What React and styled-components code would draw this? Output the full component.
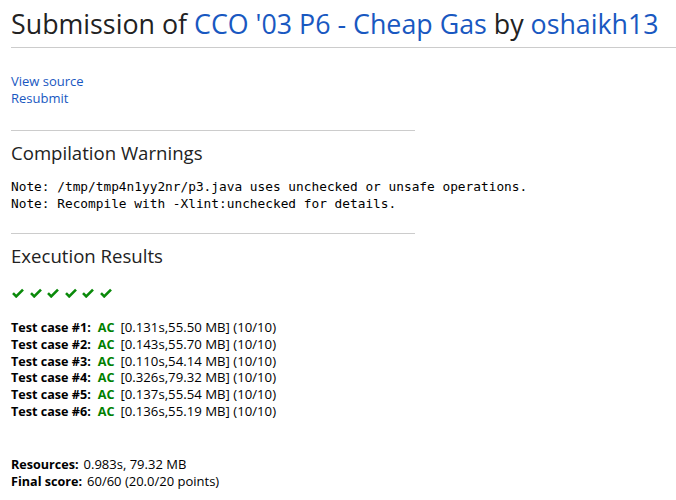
import React from "react";
import styled, { createGlobalStyle } from "styled-components";

const Global = createGlobalStyle`
  body {
    margin: 0;
    background: #fff;
    font-family: "Open Sans", "Noto Sans", sans-serif;
    color: #000;
  }
`;

const Page = styled.div`
  padding: 0 0 0 11px;
`;

const Title = styled.h2`
  margin: 0;
  padding: 6px 0 5px;
  font-size: 26.8px;
  font-weight: 400;
  line-height: 36px;
  color: #222;
  border-bottom: 1px solid #ccc;
`;

const Link = styled.a`
  color: #1958c1;
  text-decoration: none;
`;

const Links = styled.div`
  margin-top: 25px;
  display: flex;
  flex-direction: column;
  font-size: 13px;
  line-height: 17px;
`;

const Rule = styled.hr`
  width: 404px;
  margin: ${(p) => p.gap || "24px"} 0 0;
  border: 0;
  border-top: 1px solid #ccc;
`;

const Heading = styled.h3`
  margin: 10px 0 0;
  font-size: 18.6px;
  font-weight: 400;
  line-height: 24px;
  color: #222;
`;

const Pre = styled.pre`
  margin: 13px 0 0;
  font-family: "DejaVu Sans Mono", monospace;
  font-size: 12.8px;
  line-height: 17px;
`;

const Checks = styled.div`
  display: flex;
  gap: 5.5px;
  margin: 20px 0 0 1px;
`;

const Cases = styled.div`
  margin-top: 21px;
  font-size: 13.2px;
  line-height: 16.8px;
`;

const Row = styled.div`
  height: 16.8px;
  white-space: nowrap;
`;

const Bold = styled.b`
  font-weight: 700;
  font-size: 12.6px;
  line-height: 1;
  margin-right: ${(p) => p.gap || "5px"};
`;

const Ac = styled.span`
  color: #008000;
  font-weight: 700;
  font-size: 12.6px;
  line-height: 1;
  margin-right: 6px;
`;

const Summary = styled.div`
  margin-top: 36px;
  font-size: 13px;
  line-height: 17px;
`;

const Check = () => (
  <svg width="12" height="10" viewBox="0 0 12 10">
    <path d="M1 5.2 L4.2 8.4 L11 1.6" stroke="#0a8a0a" strokeWidth="2.6" fill="none" />
  </svg>
);

const cases = [
  "0.131s,55.50 MB",
  "0.143s,55.70 MB",
  "0.110s,54.14 MB",
  "0.326s,79.32 MB",
  "0.137s,55.54 MB",
  "0.136s,55.19 MB",
];

export default function App() {
  return (
    <Page>
      <Global />
      <Title>
        Submission of <Link href="#">CCO '03 P6 - Cheap Gas</Link> by{" "}
        <Link href="#">oshaikh13</Link>
      </Title>
      <Links>
        <Link href="#">View source</Link>
        <Link href="#">Resubmit</Link>
      </Links>
      <Rule gap="23px" />
      <Heading>Compilation Warnings</Heading>
      <Pre>
        {"Note: /tmp/tmp4n1yy2nr/p3.java uses unchecked or unsafe operations.\nNote: Recompile with -Xlint:unchecked for details."}
      </Pre>
      <Rule gap="21px" />
      <Heading>Execution Results</Heading>
      <Checks>
        {cases.map((c, i) => (
          <Check key={i} />
        ))}
      </Checks>
      <Cases>
        {cases.map((c, i) => (
          <Row key={i}>
            <Bold gap="7px">Test case #{i + 1}:</Bold>
            <Ac>AC</Ac>[{c}] (10/10)
          </Row>
        ))}
      </Cases>
      <Summary>
        <Row>
          <Bold>Resources:</Bold>0.983s, 79.32 MB
        </Row>
        <Row>
          <Bold>Final score:</Bold>60/60 (20.0/20 points)
        </Row>
      </Summary>
    </Page>
  );
}
